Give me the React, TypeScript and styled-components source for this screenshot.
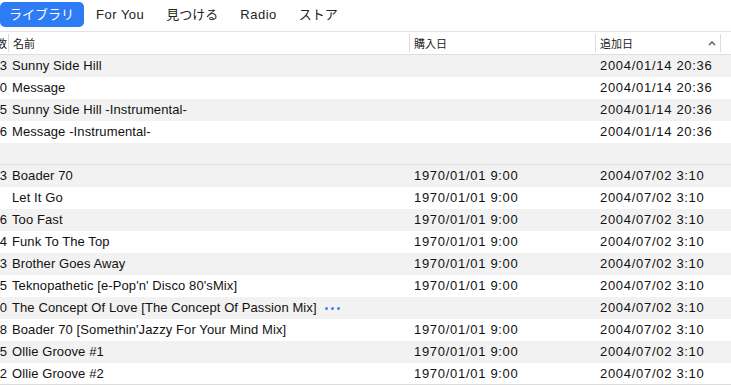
import React from "react";
import styled, { createGlobalStyle } from "styled-components";

const Global = createGlobalStyle`
  html, body { margin: 0; padding: 0; background: #fff; }
  body {
    font-family: "Liberation Sans", "Noto Sans CJK JP", sans-serif;
    color: #1a1a1a;
    overflow: hidden;
  }
`;

const Page = styled.div`
  width: 731px;
  height: 385px;
  overflow: hidden;
  background: #fff;
`;

const TabBar = styled.nav`
  display: flex;
  align-items: flex-start;
  gap: 3px;
  height: 29px;
  padding-top: 2px;
  border-bottom: 1px solid #e3e3e3;
`;

const Tab = styled.div<{ $active?: boolean; $latin?: boolean }>`
  height: 25px;
  line-height: 25px;
  padding: 0 10px 0 9px;
  font-size: 13px;
  letter-spacing: ${(p) => (p.$latin ? "0.5px" : "0")};
  border-radius: 5px;
  color: ${(p) => (p.$active ? "#fff" : "#222")};
  background: ${(p) => (p.$active ? "#2d7cf6" : "transparent")};
  white-space: nowrap;
`;

const COLS = "8px 401px 186px 125px 1fr";

const Header = styled.div`
  display: grid;
  grid-template-columns: ${COLS};
  height: 22px;
  border-bottom: 1px solid #dedede;
  font-size: 11px;
  color: #222;
`;

const HeadCell = styled.div<{ $first?: boolean; $sep?: boolean }>`
  display: flex;
  align-items: center;
  justify-content: ${(p) => (p.$first ? "flex-end" : "space-between")};
  overflow: hidden;
  white-space: nowrap;
  margin: 2px 0;
  padding: ${(p) => (p.$first ? "0 1px 0 0" : "0 4px 0 4px")};
  border-left: ${(p) => (p.$sep ? "1px solid #dcdcdc" : "none")};
`;

const Caret = styled.svg`
  width: 8px;
  height: 6px;
`;

const Group = styled.div<{ $divider?: boolean }>`
  border-bottom: ${(p) => (p.$divider ? "1px solid #dedede" : "none")};
`;

const Row = styled.div<{ $alt?: boolean; $short?: boolean }>`
  display: grid;
  grid-template-columns: ${COLS};
  height: ${(p) => (p.$short ? 21 : 22)}px;
  line-height: 22px;
  font-size: 13px;
  background: ${(p) => (p.$alt ? "#f2f2f2" : "#fff")};
  color: #111;
`;

const NumCell = styled.div`
  display: flex;
  justify-content: flex-end;
  overflow: hidden;
  white-space: nowrap;
  padding-right: 1px;
`;

const Cell = styled.div<{ $date?: boolean }>`
  padding-left: ${(p) => (p.$date ? 5 : 4)}px;
  white-space: nowrap;
  overflow: hidden;
  display: flex;
  align-items: center;
  letter-spacing: ${(p) => (p.$date ? "0.7px" : "0.1px")};
`;

const Dots = styled.span`
  display: inline-flex;
  gap: 3px;
  margin-left: 8px;
  align-items: center;
`;

const Dot = styled.i`
  width: 3px;
  height: 3px;
  border-radius: 50%;
  background: #3b82f6;
  display: block;
`;

const Footer = styled.div`
  border-bottom: 1px solid #dcdcdc;
`;

type Track = { n: string; name: string; bought: string; added: string; more?: boolean };

const group1: Track[] = [
  { n: "113", name: "Sunny Side Hill", bought: "", added: "2004/01/14 20:36" },
  { n: "90", name: "Message", bought: "", added: "2004/01/14 20:36" },
  { n: "35", name: "Sunny Side Hill -Instrumental-", bought: "", added: "2004/01/14 20:36" },
  { n: "26", name: "Message -Instrumental-", bought: "", added: "2004/01/14 20:36" },
];

const D70 = "1970/01/01 9:00";
const A04 = "2004/07/02 3:10";

const group2: Track[] = [
  { n: "23", name: "Boader 70", bought: D70, added: A04 },
  { n: "", name: "Let It Go", bought: D70, added: A04 },
  { n: "16", name: "Too Fast", bought: D70, added: A04 },
  { n: "14", name: "Funk To The Top", bought: D70, added: A04 },
  { n: "13", name: "Brother Goes Away", bought: D70, added: A04 },
  { n: "15", name: "Teknopathetic [e-Pop'n' Disco 80'sMix]", bought: D70, added: A04 },
  { n: "20", name: "The Concept Of Love [The Concept Of Passion Mix]", bought: "", added: A04, more: true },
  { n: "18", name: "Boader 70 [Somethin'Jazzy For Your Mind Mix]", bought: D70, added: A04 },
  { n: "15", name: "Ollie Groove #1", bought: D70, added: A04 },
  { n: "12", name: "Ollie Groove #2", bought: D70, added: A04 },
];

const TrackRow = ({ t, alt, short }: { t: Track; alt: boolean; short?: boolean }) => (
  <Row $alt={alt} $short={short}>
    <NumCell>{t.n}</NumCell>
    <Cell>
      {t.name}
      {t.more && (
        <Dots>
          <Dot />
          <Dot />
          <Dot />
        </Dots>
      )}
    </Cell>
    <Cell $date>{t.bought}</Cell>
    <Cell $date>{t.added}</Cell>
    <Cell />
  </Row>
);

export default function App() {
  return (
    <Page>
      <Global />
      <TabBar>
        <Tab $active>ライブラリ</Tab>
        <Tab $latin>For You</Tab>
        <Tab>見つける</Tab>
        <Tab $latin>Radio</Tab>
        <Tab>ストア</Tab>
      </TabBar>
      <Header>
        <HeadCell $first>回数</HeadCell>
        <HeadCell $sep>名前</HeadCell>
        <HeadCell $sep>購入日</HeadCell>
        <HeadCell $sep>
          <span>追加日</span>
          <Caret viewBox="0 0 8 6">
            <path d="M1 5 L4 2 L7 5" fill="none" stroke="#555" strokeWidth="1.3" />
          </Caret>
        </HeadCell>
        <HeadCell $sep />
      </Header>
      <Group $divider>
        {group1.map((t, i) => (
          <TrackRow key={i} t={t} alt={i % 2 === 0} />
        ))}
        <TrackRow t={{ n: "", name: "", bought: "", added: "" }} alt short />
      </Group>
      <Footer>
        {group2.map((t, i) => (
          <TrackRow key={i} t={t} alt={i % 2 === 0} short={i === group2.length - 1} />
        ))}
      </Footer>
    </Page>
  );
}
